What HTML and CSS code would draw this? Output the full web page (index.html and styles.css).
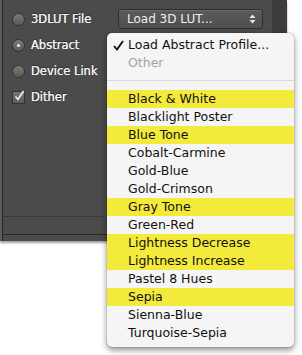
FILE: index.html
```html
<!DOCTYPE html>
<html lang="en">
<head>
    <meta charset="UTF-8">
    <meta name="viewport" content="width=device-width, initial-scale=1.0">
    <title>Color Lookup</title>
    <link rel="stylesheet" href="styles.css">
</head>
<body>
    <div class="panel">
        <div class="main">
            <div class="row">
                <span class="radio"></span>
                <span class="label">3DLUT File</span>
                <div class="popup">
                    <span>Load 3D LUT...</span>
                    <svg class="arrows" width="7" height="10" viewBox="0 0 7 10">
                        <path d="M3.5 0.5 L6.5 4 L0.5 4 Z M3.5 9.5 L6.5 6 L0.5 6 Z" fill="#e6e6e6"/>
                    </svg>
                </div>
            </div>
            <div class="row">
                <span class="radio on"></span>
                <span class="label">Abstract</span>
            </div>
            <div class="row">
                <span class="radio"></span>
                <span class="label">Device Link</span>
            </div>
            <div class="row">
                <span class="check">
                    <svg width="12" height="12" viewBox="0 0 12 12">
                        <path d="M2.5 6.5 L5 9.5 L10.5 1" fill="none" stroke="#f2f2f2" stroke-width="1.6"/>
                    </svg>
                </span>
                <span class="label">Dither</span>
            </div>
            <div class="rule dotted"></div>
            <div class="rule solid"></div>
        </div>
        <div class="edge"></div>
    </div>

    <div class="menu">
        <div class="item checked">
            <svg class="tick" width="11" height="11" viewBox="0 0 11 11">
                <path d="M1 6 L4 9.5 L10 1" fill="none" stroke="#111" stroke-width="1.8"/>
            </svg>
            Load Abstract Profile...
        </div>
        <div class="item disabled">Other</div>
        <div class="separator"></div>
        <div class="item hl">Black &amp; White</div>
        <div class="item">Blacklight Poster</div>
        <div class="item hl">Blue Tone</div>
        <div class="item">Cobalt-Carmine</div>
        <div class="item">Gold-Blue</div>
        <div class="item">Gold-Crimson</div>
        <div class="item hl">Gray Tone</div>
        <div class="item">Green-Red</div>
        <div class="item hl">Lightness Decrease</div>
        <div class="item hl">Lightness Increase</div>
        <div class="item">Pastel 8 Hues</div>
        <div class="item hl">Sepia</div>
        <div class="item">Sienna-Blue</div>
        <div class="item">Turquoise-Sepia</div>
    </div>
</body>
</html>
```

FILE: styles.css
```css
body {
    margin: 0;
    background-color: #ffffff;
    font-family: "DejaVu Sans", sans-serif;
    width: 302px;
    height: 355px;
    position: relative;
    overflow: hidden;
}
.panel {
    display: flex;
    width: 285px;
    height: 241px;
    border-left: 2px solid #5c5c5c;
    background-color: #4b4b4b;
    box-shadow: 0 2px 2px rgba(40, 40, 60, 0.45);
}
.main {
    flex: 1;
    display: flex;
    flex-direction: column;
    border-left: 1px solid #262626;
    padding-top: 6px;
}
.row {
    display: flex;
    align-items: center;
    height: 26px;
    padding-left: 9px;
    padding-right: 9px;
}
.label {
    margin-left: 6px;
    color: #f0f0f0;
    font-size: 11.5px;
    text-shadow: 0 0 0.5px #ffffff, 0 -1px 0 rgba(0, 0, 0, 0.4);
}
.radio {
    width: 11px;
    height: 11px;
    border-radius: 50%;
    border: 1px solid #333;
    background: linear-gradient(#7a7a7a, #5a5a5a);
    position: relative;
}
.radio.on::after {
    content: "";
    position: absolute;
    left: 4px;
    top: 4px;
    width: 3px;
    height: 3px;
    border-radius: 50%;
    background-color: #f4f4f4;
}
.check {
    width: 11px;
    height: 11px;
    border: 1px solid #333;
    background: linear-gradient(#777, #5a5a5a);
    position: relative;
}
.check svg {
    position: absolute;
    left: 0;
    top: -2px;
}
.popup {
    margin-left: auto;
    width: 145px;
    height: 20px;
    box-sizing: border-box;
    display: flex;
    align-items: center;
    justify-content: space-between;
    padding: 0 6px 0 8px;
    border: 1px solid #2e2e2e;
    border-radius: 3px;
    background: linear-gradient(#5a5a5a, #4f4f4f);
    box-shadow: inset 0 1px 0 #6c6c6c;
    color: #f0f0f0;
    font-size: 12px;
}
.rule {
    height: 0;
}
.rule.dotted {
    margin-top: auto;
    border-top: 1px dotted #2a2a2a;
    margin-bottom: 17px;
}
.rule.solid {
    border-top: 1px solid #2a2a2a;
    margin-bottom: 6px;
}
.edge {
    width: 15px;
    background-color: #3c3c3c;
}
.menu {
    position: absolute;
    left: 107px;
    top: 33px;
    width: 187px;
    box-sizing: border-box;
    padding: 3px 0 5px;
    background-color: #f5f5f5;
    border-radius: 5px;
    box-shadow: 0 3px 6px rgba(0, 0, 0, 0.45), 0 0 1px rgba(0, 0, 0, 0.5);
}
.item {
    height: 18px;
    line-height: 18px;
    padding-left: 21px;
    font-size: 12.5px;
    color: #111;
    position: relative;
}
.item.hl {
    background-color: #f4ea3b;
}
.item.disabled {
    color: #a3a3a8;
}
.tick {
    position: absolute;
    left: 6px;
    top: 4px;
}
.separator {
    height: 1px;
    margin: 8px 0 9px;
    background-color: #d9d9d9;
}
```
